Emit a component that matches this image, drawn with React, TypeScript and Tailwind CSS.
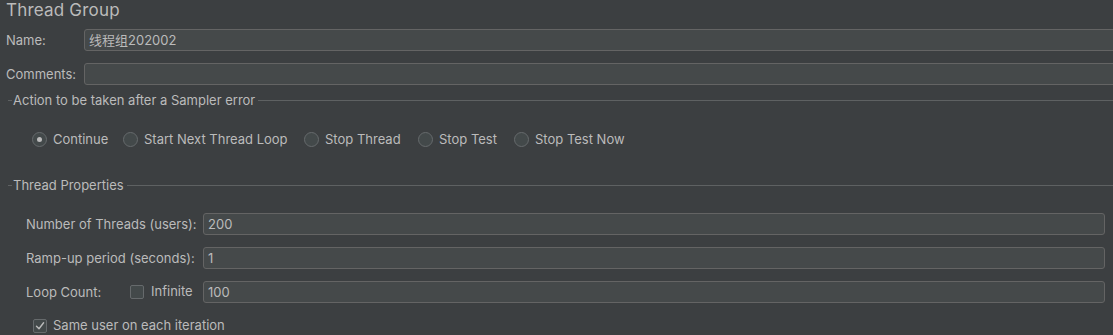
import React from 'react';

const font = '"Inter", "Noto Sans CJK SC", sans-serif';

function Field({ value, className = '' }: { value?: string; className?: string }) {
  return (
    <div
      className={`flex h-[22px] items-center rounded-[3px] border border-[#646464] bg-[#45494a] pl-[4px] pt-[1px] text-[13px] text-[#bbbbbb] ${className}`}
    >
      {value}
    </div>
  );
}

function Section({ title }: { title: string }) {
  return (
    <div className="flex h-[16px] items-center pl-[8px]">
      <div className="h-px w-[4px] bg-[#5e6162]" />
      <span className="px-[1px] text-[13px] leading-none">{title}</span>
      <div className="ml-[2px] h-px flex-1 bg-[#5e6162]" />
    </div>
  );
}

function Radio({ label, checked, width }: { label: string; checked?: boolean; width: string }) {
  return (
    <div className={`flex items-center gap-[6px] ${width}`}>
      <div className="flex h-[15px] w-[15px] items-center justify-center rounded-full border border-[#666a6c] bg-[#43494a]">
        {checked && <div className="h-[5px] w-[5px] rounded-full bg-[#bbbbbb]" />}
      </div>
      <span>{label}</span>
    </div>
  );
}

function Checkbox({ checked, size = 'h-[14px] w-[14px]' }: { checked?: boolean; size?: string }) {
  return (
    <div
      className={`flex items-center justify-center rounded-[2px] border border-[#666a6c] bg-[#43494a] ${size}`}
    >
      {checked && (
        <svg width="10" height="10" viewBox="0 0 10 10" fill="none">
          <path d="M1.5 5.2 L4 7.8 L8.6 1.8" stroke="#bbbbbb" strokeWidth="1.4" strokeLinecap="round" strokeLinejoin="round" />
        </svg>
      )}
    </div>
  );
}

export default function App() {
  return (
    <div
      className="h-[335px] w-[1113px] overflow-hidden bg-[#3c3f41] text-[13px] text-[#bbbbbb]"
      style={{ fontFamily: font }}
    >
      <div className="h-[20px] pl-[6px] text-[17px] leading-[20px] tracking-[0.2px]">Thread Group</div>

      <div className="mt-[9px] flex items-center">
        <span className="w-[84px] pl-[6px] pt-[1px]">Name:</span>
        <Field value="线程组202002" className="-mr-[10px] flex-1" />
      </div>

      <div className="mt-[12px] flex items-center">
        <span className="w-[84px] pl-[6px] pt-[1px]">Comments:</span>
        <Field className="-mr-[10px] flex-1" />
      </div>

      <div className="mt-[7px]">
        <Section title="Action to be taken after a Sampler error" />
      </div>

      <div className="mt-[24px] flex h-[15px] items-center pl-[32px]">
        <Radio label="Continue" checked width="w-[91px]" />
        <Radio label="Start Next Thread Loop" width="w-[181px]" />
        <Radio label="Stop Thread" width="w-[114px]" />
        <Radio label="Stop Test" width="w-[96px]" />
        <Radio label="Stop Test Now" width="w-[150px]" />
      </div>

      <div className="mt-[30px]">
        <Section title="Thread Properties" />
      </div>

      <div className="mt-[20px] flex items-center pl-[26px] pr-[8px]">
        <span className="w-[177px] pt-[1px]">Number of Threads (users):</span>
        <Field value="200" className="flex-1" />
      </div>

      <div className="mt-[12px] flex items-center pl-[26px] pr-[8px]">
        <span className="w-[177px] pt-[1px]">Ramp-up period (seconds):</span>
        <Field value="1" className="flex-1" />
      </div>

      <div className="mt-[12px] flex items-center pl-[26px] pr-[8px]">
        <span className="w-[104px] pt-[1px]">Loop Count:</span>
        <div className="flex w-[73px] items-center gap-[7px]">
          <Checkbox size="h-[14px] w-[14px]" />
          <span>Infinite</span>
        </div>
        <Field value="100" className="flex-1" />
      </div>

      <div className="mt-[16px] flex h-[14px] items-center gap-[6px] pl-[33px]">
        <Checkbox checked size="h-[14px] w-[14px]" />
        <span>Same user on each iteration</span>
      </div>
    </div>
  );
}
